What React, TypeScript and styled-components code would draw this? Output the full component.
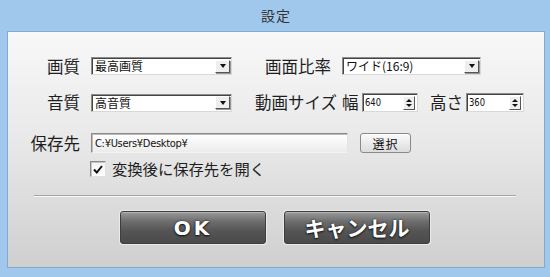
import * as React from 'react';
import styled, { createGlobalStyle } from 'styled-components';

const GlobalStyle = createGlobalStyle`
  html, body { margin: 0; padding: 0; }
  body {
    width: 550px;
    height: 277px;
    overflow: hidden;
    background: #9fc8ec;
    font-family: "Noto Sans CJK JP", "Noto Sans", sans-serif;
    color: #222;
  }
`;

const Frame = styled.div`
  width: 550px;
  height: 277px;
  box-sizing: border-box;
  display: flex;
  flex-direction: column;
  padding: 0 5px 9px 7px;
  background: #9fc8ec;
`;

const TitleBar = styled.div`
  height: 30px;
  display: flex;
  align-items: center;
  justify-content: center;
  font-size: 14px;
  color: #333;
  letter-spacing: 1px;
  padding-bottom: 1px;
`;

const Panel = styled.div`
  flex: 1;
  display: flex;
  flex-direction: column;
  border: 1px solid #7fabd4;
  background: linear-gradient(to bottom, #f8f8f8 0%, #e9e9e9 45%, #cfcfcf 100%);
`;

const Row = styled.div<{ $top: number; $h: number }>`
  display: flex;
  align-items: center;
  margin-top: ${(p) => p.$top}px;
  height: ${(p) => p.$h}px;
`;

const Label = styled.span<{ $w: number; $ml?: number; $size?: number; $left?: boolean }>`
  width: ${(p) => p.$w}px;
  margin-left: ${(p) => p.$ml ?? 0}px;
  text-align: ${(p) => (p.$left ? 'left' : 'right')};
  font-size: ${(p) => p.$size ?? 16.5}px;
  line-height: 1;
  white-space: nowrap;
  flex-shrink: 0;
  color: #1e1e1e;
`;

const SelectBox = styled.div<{ $w: number; $ml: number }>`
  width: ${(p) => p.$w}px;
  height: 18px;
  margin-left: ${(p) => p.$ml}px;
  box-sizing: border-box;
  display: flex;
  align-items: center;
  background: #fff;
  border: 1px solid #8c8c8c;
  border-right-color: #d8d8d8;
  border-bottom-color: #d8d8d8;
  box-shadow: inset 1px 1px 0 #444;
  padding: 0 1px 0 3px;
  flex-shrink: 0;
`;

const SelectText = styled.span`
  flex: 1;
  font-size: 12px;
  line-height: 1;
  color: #111;
  white-space: nowrap;
`;

const ArrowBtn = styled.div`
  width: 15px;
  height: 13px;
  box-sizing: border-box;
  display: flex;
  align-items: center;
  justify-content: center;
  background: #eeeeee;
  border: 1px solid #fff;
  border-right-color: #555;
  border-bottom-color: #555;
  box-shadow: 1px 1px 0 #999;
`;

const DownTri = styled.span`
  width: 0;
  height: 0;
  border-left: 3.5px solid transparent;
  border-right: 3.5px solid transparent;
  border-top: 4px solid #111;
`;

const UpTri = styled.span`
  width: 0;
  height: 0;
  border-left: 3px solid transparent;
  border-right: 3px solid transparent;
  border-bottom: 3px solid #111;
`;

const SmallDownTri = styled.span`
  width: 0;
  height: 0;
  border-left: 3px solid transparent;
  border-right: 3px solid transparent;
  border-top: 3px solid #111;
`;

const SpinBox = styled.div<{ $w: number; $ml: number }>`
  width: ${(p) => p.$w}px;
  height: 19px;
  margin-left: ${(p) => p.$ml}px;
  box-sizing: border-box;
  display: flex;
  align-items: center;
  background: #fff;
  border: 1px solid #8c8c8c;
  border-right-color: #d8d8d8;
  border-bottom-color: #d8d8d8;
  box-shadow: inset 1px 1px 0 #444;
  padding: 0 2px 0 2px;
  flex-shrink: 0;
`;

const SpinText = styled.span`
  flex: 1;
  font-family: "DejaVu Sans Condensed", "Liberation Sans Narrow", "Liberation Sans", sans-serif;
  font-size: 11px;
  transform: scaleX(0.85);
  transform-origin: left center;
  color: #111;
  line-height: 1;
`;

const SpinBtn = styled.div`
  width: 12px;
  height: 14px;
  box-sizing: border-box;
  display: flex;
  flex-direction: column;
  align-items: center;
  justify-content: center;
  gap: 2px;
  background: #eeeeee;
  border: 1px solid #fff;
  border-right-color: #555;
  border-bottom-color: #555;
`;

const PathInput = styled.div`
  width: 257px;
  height: 20px;
  margin-left: 11px;
  box-sizing: border-box;
  display: flex;
  align-items: center;
  padding-left: 3px;
  background: linear-gradient(to bottom, #ffffff, #ececec);
  border: 1px solid #8a8a8a;
  border-right-color: #e4e4e4;
  border-bottom-color: #f2f2f2;
  box-shadow: inset 1px 1px 0 #bbb;
  font-family: "DejaVu Sans Condensed", "Liberation Sans", sans-serif;
  font-size: 11px;
  letter-spacing: -0.3px;
  color: #111;
  flex-shrink: 0;
`;

const SmallButton = styled.div`
  width: 51px;
  height: 20px;
  margin-left: 12px;
  box-sizing: border-box;
  display: flex;
  align-items: center;
  justify-content: center;
  border: 1px solid #8a8a8a;
  border-radius: 3px;
  background: linear-gradient(to bottom, #fbfbfb, #dcdcdc);
  box-shadow: inset 0 1px 0 #fff;
  font-size: 12px;
  letter-spacing: 1px;
  color: #111;
`;

const CheckBox = styled.div`
  width: 16px;
  height: 16px;
  margin-left: 82px;
  box-sizing: border-box;
  display: flex;
  align-items: center;
  justify-content: center;
  background: linear-gradient(to bottom, #f3f3f3, #ffffff);
  border: 1px solid #8a8a8a;
  border-right-color: #e0e0e0;
  border-bottom-color: #e0e0e0;
  box-shadow: inset 1px 1px 0 #c4c4c4;
`;

const Separator = styled.div`
  margin: 18px 0 0 26px;
  width: 482px;
  height: 1px;
  background: #a6a6a6;
  border-bottom: 1px solid #f7f7f7;
`;

const ButtonRow = styled.div`
  display: flex;
  margin: 14px 0 0 112px;
  gap: 18px;
`;

const BigButton = styled.div`
  width: 146px;
  height: 33px;
  box-sizing: border-box;
  display: flex;
  align-items: center;
  justify-content: center;
  border: 1px solid #3d3d3d;
  border-radius: 3px;
  background: linear-gradient(to bottom, #9a9a9a 0%, #6e6e6e 30%, #555 60%, #4a4a4a 100%);
  box-shadow: 0 0 0 1px #eaeaea, inset 0 1px 0 #b5b5b5;
  font-family: "Noto Sans CJK JP", "DejaVu Sans", sans-serif;
  font-weight: 700;
  font-size: 21px;
  color: #fff;
  text-shadow: 0 1px 2px #111, 0 0 2px #222;
  line-height: 1;
`;

const OkText = styled.span`
  font-family: "DejaVu Sans", sans-serif;
  font-weight: 700;
  letter-spacing: 3px;
  font-size: 20px;
`;

export default function App() {
  return (
    <>
      <GlobalStyle />
      <Frame>
        <TitleBar>設定</TitleBar>
        <Panel>
          <Row $top={25} $h={18}>
            <Label $w={72}>画質</Label>
            <SelectBox $w={141} $ml={11}>
              <SelectText>最高画質</SelectText>
              <ArrowBtn><DownTri /></ArrowBtn>
            </SelectBox>
            <Label $w={70} $ml={29}>画面比率</Label>
            <SelectBox $w={139} $ml={11}>
              <SelectText>ワイド(16:9)</SelectText>
              <ArrowBtn><DownTri /></ArrowBtn>
            </SelectBox>
          </Row>
          <Row $top={18} $h={19}>
            <Label $w={72}>音質</Label>
            <SelectBox $w={141} $ml={11}>
              <SelectText>高音質</SelectText>
              <ArrowBtn><DownTri /></ArrowBtn>
            </SelectBox>
            <Label $w={88} $ml={17}>動画サイズ</Label>
            <Label $w={14} $ml={5}>幅</Label>
            <SpinBox $w={56} $ml={6}>
              <SpinText>640</SpinText>
              <SpinBtn><UpTri /><SmallDownTri /></SpinBtn>
            </SpinBox>
            <Label $w={32} $ml={12}>高さ</Label>
            <SpinBox $w={58} $ml={4}>
              <SpinText>360</SpinText>
              <SpinBtn><UpTri /><SmallDownTri /></SpinBtn>
            </SpinBox>
          </Row>
          <Row $top={21} $h={20}>
            <Label $w={72}>保存先</Label>
            <PathInput>C:¥Users¥Desktop¥</PathInput>
            <SmallButton>選択</SmallButton>
          </Row>
          <Row $top={8} $h={16}>
            <CheckBox>
              <svg width="10" height="9" viewBox="0 0 10 9">
                <path d="M1 4.5 L3.8 7.5 L9 1" fill="none" stroke="#111" strokeWidth="2" />
              </svg>
            </CheckBox>
            <Label $w={160} $ml={6} $size={15.3} $left>変換後に保存先を開く</Label>
          </Row>
          <Separator />
          <ButtonRow>
            <BigButton><OkText>OK</OkText></BigButton>
            <BigButton>キャンセル</BigButton>
          </ButtonRow>
        </Panel>
      </Frame>
    </>
  );
}
